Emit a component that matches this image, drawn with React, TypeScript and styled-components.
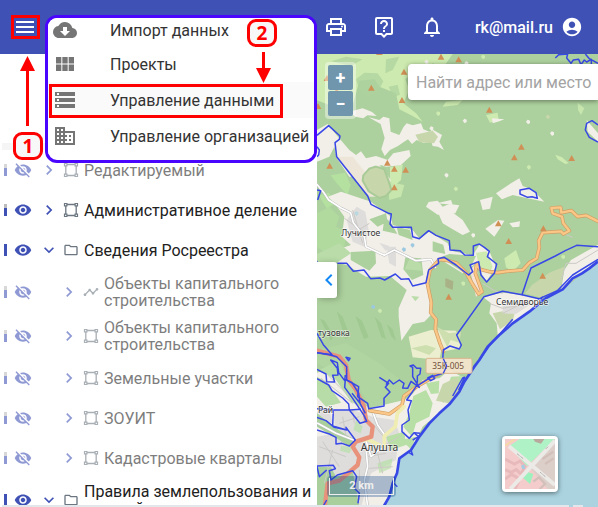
import React from 'react';
import styled, { createGlobalStyle } from 'styled-components';
import {
  MdMenu, MdCloudDownload, MdViewModule, MdStorage, MdDomain, MdOutlinePrint, MdOutlineLiveHelp,
  MdNotificationsNone, MdAccountCircle, MdVisibility, MdVisibilityOff, MdChevronRight, MdExpandMore,
  MdChevronLeft, MdOutlineFolder, MdTimeline,
} from 'react-icons/md';

const indigo = '#3f51b5';
const red = '#ff0000';

const GlobalStyle = createGlobalStyle`
  * { box-sizing: border-box; }
  html, body, #root { height: 100%; }
  body { margin: 0; overflow: hidden; font-family: Roboto, sans-serif; font-size: 16px; color: #212121; background: #fff; }
  button { font: inherit; color: inherit; border: 0; padding: 0; background: none; cursor: pointer; }
  svg { display: block; }
`;

const Page = styled.div`
  position: relative;
  display: grid;
  grid-template-rows: 54px 1fr;
  height: 100vh;
  overflow: hidden;
`;

const Header = styled.header`
  display: flex;
  align-items: center;
  justify-content: space-between;
  padding: 0 15px 0 13px;
  background: ${indigo};
  color: #fff;
`;

const IconButton = styled.button`
  display: grid;
  place-items: center;
  width: 24px;
  height: 24px;
`;

const Actions = styled.div`
  display: flex;
  align-items: center;
  gap: 24px;
`;

const Account = styled.a`
  display: flex;
  align-items: center;
  gap: 8px;
  margin-left: 7px;
  color: #fff;
  font-weight: 500;
  text-decoration: none;
`;

const Main = styled.main`
  display: grid;
  grid-template-columns: 317px 1fr;
  min-height: 0;
`;

const Sidebar = styled.aside`
  min-height: 0;
  overflow: hidden;
  background: #fff;
`;

const SidebarTop = styled.div`
  height: 96px;
  margin-left: 2px;
  border-bottom: 7px solid #f5f5f5;
`;

const Tree = styled.ul`
  margin: 0;
  padding: 0;
  list-style: none;
`;

const Row = styled.li<{ $tall?: boolean; $faded?: boolean }>`
  display: flex;
  align-items: center;
  height: ${p => (p.$tall ? 44 : 40)}px;
  padding-left: 4px;
  opacity: ${p => (p.$faded ? 0.58 : 1)};
`;

const Level = styled.span<{ $full?: boolean }>`
  flex: none;
  width: 3px;
  height: 12px;
  background: ${p => (p.$full ? indigo : `linear-gradient(#bdbdbd 4px, ${indigo} 4px)`)};
`;

const RowButton = styled.button<{ $nested?: boolean }>`
  flex: none;
  margin-left: ${p => (p.$nested ? 27 : 7)}px;
  color: ${indigo};
`;

const RowIcon = styled.span`
  flex: none;
  width: 16px;
  margin: 0 5px 0 4px;
  color: #6b7680;
`;

const RowLabel = styled.span`
  flex: 1;
  line-height: 17px;
`;

const MapPane = styled.section`
  position: relative;
  overflow: hidden;
  background: #aad3df;
`;

const MapDrawing = styled.svg`
  width: 100%;
  height: 100%;
`;

const ZoomControl = styled.div`
  position: absolute;
  left: 8px;
  top: 8px;
  display: grid;
  gap: 1px;
  padding: 3px;
  border-radius: 4px;
  background: rgba(255, 255, 255, 0.4);
`;

const ZoomButton = styled.button`
  width: 25px;
  height: 25px;
  border-radius: 2px;
  background: #7096ae;
  color: #fff;
  font-size: 18px;
  font-weight: 700;
  line-height: 24px;
`;

const SearchInput = styled.input`
  position: absolute;
  left: 91px;
  top: 10px;
  width: calc(100% - 91px);
  height: 36px;
  padding: 0 0 0 8px;
  border: 0;
  border-radius: 4px 0 0 4px;
  background: #fff;
  box-shadow: 0 1px 5px rgba(0, 0, 0, 0.45);
  font: 16px Roboto, sans-serif;
  outline: 0;
  &::placeholder { color: #a3a3a3; opacity: 1; }
`;

const Collapse = styled.button`
  position: absolute;
  left: 0;
  top: 208px;
  display: grid;
  place-items: center;
  width: 20px;
  height: 36px;
  border-radius: 0 3px 3px 0;
  background: #fff;
  color: #1488f5;
  box-shadow: 2px 1px 6px rgba(0, 0, 0, 0.25);
  svg { margin-right: 4px; }
`;

const Scale = styled.div`
  position: absolute;
  left: 10px;
  bottom: 10px;
  padding: 2px;
  border-radius: 4px;
  background: rgba(0, 60, 136, 0.3);
`;

const ScaleBar = styled.div`
  width: 65px;
  height: 17px;
  border: 1px solid #eee;
  border-top: 0;
  color: #eee;
  font-size: 11px;
  font-weight: 700;
  line-height: 16px;
  text-align: center;
`;

const BaseMap = styled.button`
  position: absolute;
  right: 40px;
  bottom: 15px;
  width: 56px;
  height: 56px;
  overflow: hidden;
  background: #fff;
  && { padding: 3px; }
  border-radius: 4px;
  box-shadow: 0 1px 5px rgba(0, 0, 0, 0.5);
`;

const Menu = styled.nav`
  position: absolute;
  left: 45px;
  top: 15px;
  width: 272px;
  height: 148px;
  overflow: hidden;
  border: 3px solid #4a05ff;
  border-radius: 12px;
  background: #fff;
`;

const MenuItem = styled.a<{ $current?: boolean }>`
  display: grid;
  grid-template-columns: 24px 1fr;
  gap: 33px;
  align-items: center;
  height: 36px;
  padding-left: 5px;
  background: ${p => (p.$current ? '#fafafa' : '#fff')};
  color: #333;
  text-decoration: none;
  white-space: nowrap;
  &:first-child { height: 28px; padding-bottom: 6px; }
  svg { color: #757575; }
`;

const Outline = styled.div<{ $x: number; $y: number; $w: number; $h: number }>`
  position: absolute;
  left: ${p => p.$x}px;
  top: ${p => p.$y}px;
  width: ${p => p.$w}px;
  height: ${p => p.$h}px;
  border: 3px solid ${red};
  pointer-events: none;
`;

const Step = styled.span<{ $x: number; $y: number }>`
  position: absolute;
  left: ${p => p.$x}px;
  top: ${p => p.$y}px;
  display: grid;
  place-items: center;
  width: 30px;
  height: 28px;
  border: 3px solid ${red};
  border-radius: 9px;
  background: #f8f8f8;
  color: ${red};
  font: 700 19px/22px "Open Sans", sans-serif;
`;

const Arrow = styled.svg<{ $x: number; $y: number }>`
  position: absolute;
  left: ${p => p.$x}px;
  top: ${p => p.$y}px;
  pointer-events: none;
`;

const BottomTrack = styled.div`
  position: absolute;
  left: 2px;
  right: 15px;
  bottom: 0;
  display: grid;
  grid-template-columns: 1fr 10px;
  gap: 4px;
  height: 2px;
  &::before, &::after { content: ''; background: #e3e6ea; }
`;

const PolygonIcon = () => (
  <svg width="16" height="16" viewBox="0 0 16 16" fill="none" stroke="currentColor">
    <path d="M4 2.5h8M4 13.5h8M2.8 4v8M13.2 4v8" strokeWidth="1.3" />
    <path d="M1.5 1.5h2.4v2.4H1.5zM12.1 1.5h2.4v2.4h-2.4zM1.5 12.1h2.4v2.4H1.5zM12.1 12.1h2.4v2.4h-2.4z" strokeWidth="1.2" />
  </svg>
);

type Kind = 'area' | 'line' | 'folder';
type Layer = { name: string; kind: Kind; hidden?: boolean; nested?: boolean; open?: boolean; tall?: boolean };

const layers: Layer[] = [
  { name: 'Редактируемый', kind: 'area', hidden: true },
  { name: 'Административное деление', kind: 'area' },
  { name: 'Сведения Росреестра', kind: 'folder', open: true },
  { name: 'Объекты капитального строительства', kind: 'line', hidden: true, nested: true, tall: true },
  { name: 'Объекты капитального строительства', kind: 'area', hidden: true, nested: true, tall: true },
  { name: 'Земельные участки', kind: 'area', hidden: true, nested: true },
  { name: 'ЗОУИТ', kind: 'area', hidden: true, nested: true },
  { name: 'Кадастровые кварталы', kind: 'area', hidden: true, nested: true },
  { name: 'Правила землепользования и застройки', kind: 'folder', open: true, tall: true },
];

const kindIcon: Record<Kind, React.ReactNode> = {
  area: <PolygonIcon />,
  line: <MdTimeline size={16} />,
  folder: <MdOutlineFolder size={16} />,
};

const LayerRow = ({ layer }: { layer: Layer }) => (
  <Row $tall={layer.tall} $faded={layer.hidden}>
    <Level $full={layer.open} />
    <RowButton aria-label={`Видимость: ${layer.name}`}>
      {layer.hidden ? <MdVisibilityOff size={18} /> : <MdVisibility size={18} />}
    </RowButton>
    <RowButton $nested={layer.nested} aria-label={`Раскрыть: ${layer.name}`}>
      {layer.open ? <MdExpandMore size={20} /> : <MdChevronRight size={20} />}
    </RowButton>
    <RowIcon>{kindIcon[layer.kind]}</RowIcon>
    <RowLabel>{layer.name}</RowLabel>
  </Row>
);

const peaks: [number, number][] = [
  [375, 22], [428, 30], [264, 67], [166, 115], [258, 152], [33, 86], [62, 125], [6, 170], [520, 181],
  [616, 292], [595, 324], [767, 326], [214, 340], [235, 358], [269, 361], [41, 349], [235, 414], [190, 8],
  [547, 522], [578, 575], [682, 537], [680, 679], [398, 742],
];

const specks: [number, number, string][] = [
  [445, 212, '#f2efe9'], [635, 215, '#f2efe9'], [694, 200, '#c8d7ab'], [707, 250, '#f2efe9'], [637, 351, '#cdebb0'],
  [390, 375, '#f2efe9'], [418, 416, '#cdebb0'], [345, 235, '#f2efe9'], [365, 190, '#cdebb0'], [330, 35, '#f2efe9'],
  [450, 40, '#f2efe9'], [500, 20, '#cdebb0'], [120, 490, '#b8d8e0'], [262, 598, '#9cc9e0'], [288, 585, '#9cc9e0'],
  [170, 770, '#9cc9e0'], [190, 782, '#cdebb0'], [470, 555, '#f2efe9'], [740, 620, '#cdebb0'], [440, 700, '#cdebb0'],
];

const light = '#cdebb0';
const land = '#f2efe9';
const forest = '#add19e';
const scrub = '#c8d7ab';
const town = '#dedddc';

const MapArt = () => (
  <MapDrawing viewBox="3 12 843 1359" preserveAspectRatio="xMinYMin slice" role="img" aria-label="Карта">
    <rect width="1600" height="1500" fill={forest} />
    {/* northern meadows and clearings */}
    <g fill={light}>
      <path d="M0 0H370L350 32 310 52 268 88 280 120 262 160 300 190 320 215 290 198 250 178 240 130 190 110 176 88 130 92 112 160 70 176 0 150Z" />
      <path d="M340 12 410 12 380 55 350 40 320 70 290 82 300 40Z M390 155 440 150 425 165 380 170Z M510 195 545 188 548 210 522 218Z" />
      <path d="M718 314 738 322 758 340 748 342 725 328Z M222 352 260 344 255 390 238 405 222 395Z" />
      <path d="M215 395 265 405 255 440 220 450Z M785 158 805 175 795 195 786 180Z" opacity=".8" />
    </g>
    <g fill={forest}>
      <path d="M120 88 145 68 185 70 202 94 184 130 152 142 130 120Z M210 28 250 20 230 60 208 70Z M46 34 90 20 140 28 105 48Z M218 110 245 104 252 134 232 142Z" opacity=".75" />
    </g>
    <g fill={land}>
      <path d="M3 240 35 222 62 256 100 300 120 315 135 304 150 325 180 318 215 330 232 310 280 300 284 318 254 346 210 350 195 345 140 380 100 380 62 324 55 290 40 320 3 335Z" />
      <path d="M158 202 190 210 202 200 220 205 224 245 250 255 262 232 272 220 290 226 315 220 322 238 340 245 352 240 378 255 370 275 384 300 366 290 350 288 346 275 322 278 302 270 288 282 276 268 260 278 246 288 222 300 206 318 196 298 206 264 194 222Z" />
      <path d="M100 185 140 175 168 186 182 198 154 196 142 205 118 200Z M338 456 365 452 380 470 400 462 430 466 418 490 365 494 330 470Z" />
      <path d="M540 430 585 400 610 385 620 408 650 420 685 455 660 450 620 442 590 435 558 448Z M528 205 565 208 550 214 530 220Z M812 210 846 250 846 275 815 245Z" />
      <path d="M492 450 530 440 522 476 500 480Z" />
    </g>
    <path d="M298 254 350 242 366 260 354 280 310 276Z" fill={scrub} />
    <path d="M60 320 110 320 150 370 190 345 225 390 200 440 160 440Z" fill="#ede5d8" />
    <g stroke="#a8ca96" strokeWidth="6">
      <path d="M180 350 205 358 218 394 226 420 210 438 190 444 158 424 140 392 142 376 160 356Z" fill={scrub} />
    </g>
    <g fill="#b4e0a0">
      <path d="M44 376 88 368 104 405 94 435 62 400Z M8 435 38 428 60 460 32 475Z" />
      <path d="M3 490 40 470 70 500 60 530 92 545 85 590 30 610 3 590Z" opacity=".6" />
    </g>
    {/* valley around the northern village */}
    <path d="M36 440 75 425 165 455 225 500 230 525 290 540 310 565 340 545 395 580 405 602 470 616 490 585 520 604 540 650 510 696 480 640 440 670 372 628 340 660 330 698 345 760 350 790 325 815 290 822 256 872 248 800 248 775 272 720 222 678 150 680 92 645 64 638 60 600 105 585 78 560 85 500 60 465Z" fill={land} />
    <path d="M3 612 70 580 105 610 62 638 3 640Z" fill="#b9dca8" />
    <g fill={forest}>
      <path d="M104 606 178 602 180 640 160 662 104 630Z M242 530 282 540 290 570 248 555Z M268 622 316 625 322 675 288 690 262 658Z M206 500 226 520 244 552 200 542Z M350 574 382 584 388 612 350 604Z M160 508 210 490 215 515 185 530Z" />
      <path d="M400 612 480 618 460 660 440 665 372 622Z" />
      <path d="M266 658 280 628 314 640 318 662Z M286 738 310 740 298 754Z" fill="#b9dca8" />
    </g>
    <path d="M92 510 122 470 148 485 158 540 145 590 110 575Z M212 590 240 590 240 650 220 640Z M190 578 220 588 210 604Z" fill={town} />
    <g fill={land}>
      <path d="M365 485 400 480 440 510 462 545 440 555 410 538 380 520Z M508 536 546 510 565 512 550 538 535 560Z M362 460 405 450 410 464Z M580 520 612 514 610 530 590 532Z" />
      <path d="M462 660 482 640 486 690 500 725 480 740Z" fill="#f5e2d4" />
    </g>
    <path d="M480 608 512 604 530 650 520 670 492 660Z M565 625 600 600 614 640 590 665 570 652Z" fill={light} />
    <path d="M388 684 412 694 410 720 388 710Z" fill="#a8b286" />
    {/* eastern slope down to the shore */}
    <path d="M765 630 846 584 846 630 735 720 745 660Z M500 740 560 728 620 735 680 750 640 790 590 820 545 855 542 820 520 790 525 760Z" fill={land} />
    <path d="M648 705 700 668 745 650 735 710 680 745 628 730Z M530 790 600 776 590 812 552 838Z" fill={scrub} />
    <path d="M560 768 620 750 640 765 600 792 560 790Z" fill={town} />
    {/* southern fields */}
    <path d="M345 840 420 842 435 895 375 905 370 930 290 922 278 860Z" fill="#eceed0" />
    <path d="M362 830 400 850 435 845 430 878 404 870 394 892Z M285 895 330 885 360 895 340 915Z" fill="#cddfae" />
    <g fill="#9fc990">
      <path d="M12 806 26 812 54 860 44 872Z M62 784 80 800 102 858 88 866Z M118 798 138 812 158 862 144 868Z M176 800 196 820 210 868 196 862Z M212 822 230 838 240 872 226 860Z" />
    </g>
    <path d="M3 900 90 880 190 940 280 1010 300 1020 280 1060 170 1080 120 1000 3 940Z" fill="#b1d5a1" />
    <path d="M3 968 60 950 100 1030 160 1075 265 1050 290 1032 320 990 370 985 400 960 440 982 425 1030 390 1070 320 1130 285 1200 250 1230 215 1371H3Z" fill={land} />
    <path d="M10 960 70 930 88 975 120 1020 150 1080 105 1055 60 990Z M3 980 30 995 75 1058 30 1070 3 1040Z" fill="#b7dca7" />
    <path d="M50 1078 110 1080 170 1100 235 1110 250 1150 240 1230 165 1270 135 1371H60L3 1320V1160L60 1150Z M3 1085 40 1080 50 1120 3 1110Z" fill={town} />
    <path d="M3 1090 60 1135 115 1170 100 1190 62 1165 3 1130Z M3 1250 45 1252 60 1280 110 1262 130 1371H3Z" fill="#a8cf9c" />
    <g fill="#b8e0a6">
      <path d="M292 1038 330 1020 350 1060 340 1100 300 1120 288 1160 262 1130 280 1090Z M330 1000 370 992 368 1030 345 1032Z M405 980 442 978 420 1030 380 1060Z M210 1160 265 1145 270 1185 225 1200Z M255 1170 300 1160 285 1198Z" />
      <path d="M120 1110 140 1130 134 1150 112 1140Z M75 1188 112 1190 100 1210 72 1202Z M184 1240 230 1225 224 1255 190 1270Z" opacity=".7" />
    </g>
    <path d="M380 1002 426 980 430 1020 398 1060 360 1052Z" fill={scrub} />
    <g stroke="#ccc9c6" strokeWidth="3" fill="none">
      <path d="M10 1190 90 1220M20 1175 70 1250M50 1200 25 1300M80 1100 90 1160M110 1080 115 1120M70 1120 130 1100M170 1120 210 1170M180 1200 250 1160M185 1210 200 1270M150 1220 210 1210M15 985 110 1060M35 975 130 1070M130 1260 130 1350M160 1255 230 1250" />
      <path d="M500 700 535 722 560 730M520 760 560 775 600 768M735 690 750 640 780 640 846 600M728 545 770 562" />
      <path d="M85 505 150 550M95 560 160 520M110 480 140 580M560 790 610 765" />
    </g>
    {/* roads */}
    <g fill="none" strokeLinecap="round" strokeLinejoin="round">
      <path d="M0 400 25 430 38 450 75 474 104 488 112 518 145 560 150 590 205 616 235 600 300 632 345 628 358 652M170 1085 185 1125 210 1160M5 1120 60 1150 118 1172M150 1172 165 1220 195 1195M150 1195 155 1250 145 1290 155 1371" stroke="#bdbdbd" strokeWidth="8" />
      <path d="M0 400 25 430 38 450 75 474 104 488 112 518 145 560 150 590 205 616 235 600 300 632 345 628 358 652M170 1085 185 1125 210 1160M5 1120 60 1150 118 1172M150 1172 165 1220 195 1195M150 1195 155 1250 145 1290 155 1371" stroke="#fff" strokeWidth="5" />
      <g stroke="#cf9d66" strokeWidth="11">
        <path d="M846 514 810 496 785 500 766 482 736 488 734 472 706 474 710 490 738 500 742 520 760 542 742 552 735 544 680 548 668 572 670 592 662 625 640 638 620 660 570 664 545 668 520 665 492 658 482 640 478 670 498 725 488 732 468 700 452 670 422 640 398 632 370 628 342 660 334 700 346 758 344 788 360 808 358 838 372 880 382 905" />
        <path d="M160 1082 220 1092 258 1065 264 1038 302 1010 350 982 385 962" />
      </g>
      <g stroke="#fbc786" strokeWidth="7">
        <path d="M846 514 810 496 785 500 766 482 736 488 734 472 706 474 710 490 738 500 742 520 760 542 742 552 735 544 680 548 668 572 670 592 662 625 640 638 620 660 570 664 545 668 520 665 492 658 482 640 478 670 498 725 488 732 468 700 452 670 422 640 398 632 370 628 342 660 334 700 346 758 344 788 360 808 358 838 372 880 382 905" />
        <path d="M160 1082 220 1092 258 1065 264 1038 302 1010 350 982 385 962" />
      </g>
      <path d="M264 1070 244 1090 238 1130 205 1158 205 1190M190 1185 155 1168 125 1172" stroke="#f0edb2" strokeWidth="11" />
      <path d="M3 902 70 920 90 945 98 990 120 1020 144 1070 150 1110 170 1130 166 1160 120 1175 110 1190 130 1222 125 1245 90 1275 70 1292 35 1300 26 1371" stroke="#e8927c" strokeWidth="13" />
    </g>
    {/* sea */}
    <path d="M846 635 820 655 770 695 720 730 690 750 640 785 590 820 550 855 515 890 490 930 475 950 445 995 430 1025 395 1065 370 1090 340 1120 310 1160 285 1200 250 1230 240 1270 230 1300 215 1340 205 1371H1600V630Z" fill="#aad3df" />
    {/* district boundaries */}
    <g fill="none" stroke="#3848e6" strokeWidth="4.5" strokeLinejoin="round">
      <path d="M3 256 38 227 72 258 70 268 57 278 62 320 155 438 165 463 218 490 226 492 222 522 230 532 286 532 290 560 310 566 338 542 360 556 400 572 402 600 432 602 446 615 472 616 472 588 490 582 505 592 520 604 514 620 542 642 535 670 512 696 495 675 488 635 462 645 470 665 458 675 420 645 385 622 366 626 368 640 338 660 330 698 290 708 278 686 256 688 238 672 206 690 192 684 164 686 144 660 112 664 92 640 64 640" />
      <path d="M3 290 10 300 8 315 3 320M3 420 14 422 5 450M0 630 5 640M3 850 22 884 48 914 3 908M90 922 102 925 98 932Z" />
      <path d="M612 420 640 415 660 428 664 445 648 440 635 442 612 432ZM846 225 828 212 812 220 808 240 820 262 846 276" />
      <path d="M718 24 728 14 755 12 752 24 765 40 772 30 788 28 795 44 805 30 812 36 826 28 826 46M808 12 820 26 846 40" />
      <path d="M846 590 782 586 748 602 718 618 645 654 618 734 560 724 504 740 422 855 436 885 430 897 402 888 382 900 380 930 392 950 380 970 344 982 300 1010 272 1050 286 1052 276 1080 280 1110 258 1125 258 1145 280 1165 294 1148 312 1150" />
      <path d="M618 734 675 748 680 740M3 908 40 914 62 920 92 950 92 990 128 1010 125 1040 155 1060 158 1076 204 1068 204 1045 222 1026 208 1012 218 1000 190 982M210 1004 220 990 232 1002 250 990 264 1000 260 1014 275 1015 285 994 310 1012 290 980 290 952 282 948 292 945 302 955 314 955 312 972 304 978 304 998" />
      <path d="M3 958 30 972 32 995 56 996 50 976 66 975 64 955 44 930 64 938 68 968 86 992 88 975M3 986 38 1005 48 1022 80 1044 98 1062 100 1080 132 1120 152 1114 144 1096 110 1045 86 1012 88 988 108 998 128 1030 132 1060 108 1030M132 1060 148 1090M3 1076 50 1080 100 1080 135 1078M52 1080 50 1128 92 1140 90 1132 118 1170 100 1188 78 1180 60 1182 60 1162 40 1152 3 1140M3 1102 30 1112 55 1132 92 1140" />
      <path d="M3 1248 52 1246 58 1256 40 1262 45 1290 64 1275 110 1262 122 1280 115 1315 130 1330 126 1360M3 1250 10 1280 32 1260M20 1371 32 1350" />
      <path d="M846 628 770 675 724 722 665 748M490 930 520 888 590 808M428 1020 446 982 440 984 410 1038" />
      <path d="M335 984 350 976 356 986 344 992Z" />
      <path d="M846 635 820 655 798 670 770 685 740 718 690 744 640 785 590 820 550 855 515 890 490 930 475 950 445 995 430 1025 400 1063 370 1090 340 1120 310 1160 285 1200 250 1225 243 1270 230 1300 220 1340 202 1371" strokeWidth="8" />
      <path d="M275 1205 290 1215 284 1198M290 1170 308 1160 296 1150M232 1298 244 1310" />
    </g>
    {specks.map(([x, y, c]) => <path key={`${x}-${y}`} d={`M${x - 5} ${y}l5-6 7 3 0 7-6 4z`} fill={c} />)}
    {peaks.map(([x, y]) => <path key={`${x}-${y}`} d={`M${x} ${y - 11}l10 18h-20z`} fill="#d08f55" />)}
    <rect x="330" y="925" width="138" height="45" rx="5" fill="#f6e4cd" fillOpacity=".9" stroke="#d8b58d" strokeWidth="3" />
    <path d="M382 926 392 948 382 970" fill="none" stroke="#3848e6" strokeWidth="4" />
    <g fontFamily="Noto Sans, sans-serif" fontSize="26" fill="#353535" stroke="#fff" strokeOpacity=".65" strokeWidth="4" paintOrder="stroke">
      <text x="76" y="558">Лучистое</text>
      <text x="540" y="765">Семидворье</text>
      <text x="6" y="859">тузовка</text>
      <text x="6" y="1090">Рай</text>
      <text x="134" y="1203" fontSize="31">Алушта</text>
      <text x="349" y="958" fontSize="25" strokeWidth="0" fill="#714f3b">35К-005</text>
    </g>
  </MapDrawing>
);

const Thumbnail = () => (
  <svg width="50" height="50" viewBox="0 0 150 150" aria-hidden="true">
    <rect width="150" height="150" fill="#f4cccc" />
    <path d="M12 22 44 0H150L66 82Z" fill="#aef2c5" />
    <path d="M150 0V150H128L70 80Z" fill="#dccfca" />
    <path d="M0 60 28 75 45 66 60 82 48 105 34 92 18 100 0 92M0 120 20 106 44 120 30 150" fill="none" stroke="#e8b9bb" strokeWidth="9" />
    <path d="M85 128 102 115 120 135 104 150M112 60 145 38M120 75 146 58" fill="none" stroke="#d3c0bb" strokeWidth="7" />
    <path d="M52 115 60 96 85 105 75 135Z" fill="#9ef0bc" />
    <path d="M85 0 118 0 108 14 90 8Z" fill="#b9a89d" />
    <path d="M12 22 150 138M150 5 16 150" stroke="#eceae6" strokeWidth="12" />
    <path d="M36 44 56 60M106 100 122 114M122 30 130 22" stroke="#999" strokeWidth="3" strokeDasharray="3 2" />
    <path d="M0 20 30 0" stroke="#f5d7a8" strokeWidth="6" />
    <path d="M48 80 58 76 60 90 52 90Z" fill="#a4cde3" />
  </svg>
);

export default function App() {
  return (
    <>
      <GlobalStyle />
      <Page>
        <Header>
          <IconButton aria-label="Меню"><MdMenu size={24} /></IconButton>
          <Actions>
            <IconButton aria-label="Печать"><MdOutlinePrint size={24} /></IconButton>
            <IconButton aria-label="Справка"><MdOutlineLiveHelp size={24} /></IconButton>
            <IconButton aria-label="Уведомления"><MdNotificationsNone size={24} /></IconButton>
            <Account href="#account">rk@mail.ru<MdAccountCircle size={22} /></Account>
          </Actions>
        </Header>
        <Main>
          <Sidebar>
            <SidebarTop />
            <Tree>
              {layers.map((layer, i) => <LayerRow key={i} layer={layer} />)}
            </Tree>
          </Sidebar>
          <MapPane>
            <MapArt />
            <ZoomControl>
              <ZoomButton aria-label="Приблизить">+</ZoomButton>
              <ZoomButton aria-label="Отдалить">−</ZoomButton>
            </ZoomControl>
            <SearchInput type="text" aria-label="Поиск" placeholder="Найти адрес или место" />
            <Collapse aria-label="Свернуть панель"><MdChevronLeft size={24} /></Collapse>
            <Scale><ScaleBar>2 km</ScaleBar></Scale>
            <BaseMap aria-label="Подложка"><Thumbnail /></BaseMap>
          </MapPane>
        </Main>
        <BottomTrack />
        <Menu>
          <MenuItem href="#import"><MdCloudDownload size={24} />Импорт данных</MenuItem>
          <MenuItem href="#projects"><MdViewModule size={24} />Проекты</MenuItem>
          <MenuItem href="#data" $current><MdStorage size={24} />Управление данными</MenuItem>
          <MenuItem href="#organization"><MdDomain size={24} />Управление организацией</MenuItem>
        </Menu>
        <Outline $x={11} $y={15} $w={29} $h={24} />
        <Outline $x={49} $y={84} $w={234} $h={34} />
        <Arrow $x={20} $y={56} width="15" height="70" viewBox="0 0 15 70">
          <path d="M7.5 0 15 15H9V70H6V15H0Z" fill={red} />
        </Arrow>
        <Arrow $x={256} $y={52} width="15" height="31" viewBox="0 0 15 31">
          <path d="M6 0H9V16H15L7.5 31 0 16H6Z" fill={red} />
        </Arrow>
        <Step $x={13} $y={132}>1</Step>
        <Step $x={247} $y={19}>2</Step>
      </Page>
    </>
  );
}
